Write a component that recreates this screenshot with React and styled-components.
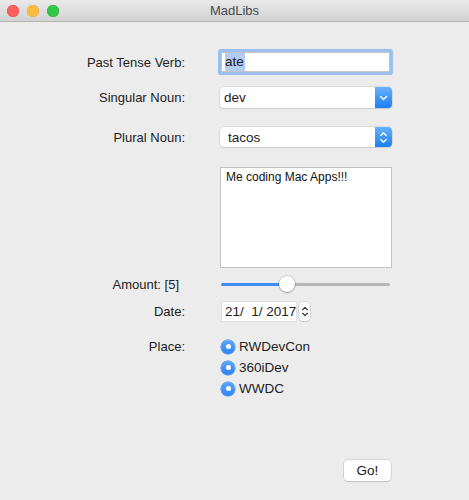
import React from "react";
import styled, { createGlobalStyle } from "styled-components";

const Global = createGlobalStyle`
  html, body { margin: 0; padding: 0; background: #ececec; }
  body { font-family: "Liberation Sans", Arial, sans-serif; font-size: 13px; color: #222; }
`;

const Window = styled.div`
  width: 469px;
  height: 500px;
  background: #ececec;
  display: flex;
  flex-direction: column;
  overflow: hidden;
`;

const TitleBar = styled.div`
  height: 21px;
  flex: none;
  display: flex;
  align-items: center;
  position: relative;
  background: linear-gradient(#e9e9e9, #d2d2d2);
  border-bottom: 1px solid #b4b4b4;
`;

const Lights = styled.div`
  display: flex;
  gap: 8px;
  padding-left: 7px;
`;

const Light = styled.span`
  width: 12px;
  height: 12px;
  border-radius: 50%;
  background: ${(p) => p.$c};
  box-shadow: inset 0 0 0 0.5px ${(p) => p.$b};
`;

const Title = styled.div`
  position: absolute;
  left: 0;
  right: 0;
  text-align: center;
  font-size: 13px;
  color: #4a4a4a;
  pointer-events: none;
`;

const Content = styled.div`
  display: flex;
  flex-direction: column;
`;

const Row = styled.div`
  display: grid;
  grid-template-columns: 185px 172px;
  column-gap: 35px;
  align-items: ${(p) => p.$align || "center"};
  margin-top: ${(p) => p.$mt}px;
`;

const Label = styled.div`
  text-align: right;
  font-size: 13px;
  color: #222;
  white-space: nowrap;
  padding-right: ${(p) => p.$pr || 0}px;
  padding-top: ${(p) => p.$pt || 0}px;
`;

const TextField = styled.div`
  height: 20px;
  margin: 0 2px 0 1px;
  background: #fff;
  border: 1px solid #c5c5c5;
  box-sizing: border-box;
  box-shadow: 0 0 0 3px #9dbff0;
  border-radius: 1px;
  display: flex;
  align-items: center;
  padding-left: 3px;
  font-size: 13.5px;
`;

const Selected = styled.span`
  background: #b1cdf3;
  padding: 1px 1px 2px 0;
`;

const Popup = styled.div`
  height: ${(p) => p.$h}px;
  background: #fff;
  border-radius: 4px;
  box-shadow: 0 0 0 0.5px #c9c9c9, 0 1px 1px rgba(0, 0, 0, 0.12);
  display: flex;
  align-items: center;
  overflow: hidden;
  font-size: 13.5px;
`;

const PopupText = styled.span`
  flex: 1;
  padding-left: ${(p) => p.$pl}px;
`;

const PopupArrow = styled.div`
  width: 17px;
  align-self: stretch;
  background: linear-gradient(#69b1fb, #1b7ff6);
  display: flex;
  align-items: center;
  justify-content: center;
`;

const TextView = styled.div`
  height: 101px;
  background: #fff;
  border: 1px solid #c2c2c2;
  box-sizing: border-box;
  padding: 2px 5px;
  font-size: 12px;
  color: #111;
`;

const Slider = styled.div`
  height: 16px;
  position: relative;
  display: flex;
  align-items: center;
  margin-right: 2px;
  margin-left: 1px;
`;

const Track = styled.div`
  height: 3px;
  width: 100%;
  border-radius: 2px;
  background: linear-gradient(
    to right,
    #3d8ef6 0,
    #3d8ef6 ${(p) => p.$pct}%,
    #b7b7b7 ${(p) => p.$pct}%,
    #b7b7b7 100%
  );
`;

const Knob = styled.div`
  position: absolute;
  top: 0;
  width: 16px;
  height: 16px;
  margin-left: -8px;
  border-radius: 50%;
  background: #fff;
  box-shadow: 0 0 0 0.5px rgba(0, 0, 0, 0.25), 0 1px 1.5px rgba(0, 0, 0, 0.25);
`;

const DateWrap = styled.div`
  display: flex;
  align-items: center;
  gap: 2px;
  padding-left: 1px;
`;

const DateField = styled.div`
  width: 76px;
  height: 21px;
  box-sizing: border-box;
  background: #fff;
  border: 1px solid #e0e0e0;
  display: flex;
  align-items: center;
  padding-left: 3px;
  white-space: pre;
  font-size: 13.5px;
`;

const Stepper = styled.div`
  width: 11px;
  height: 19px;
  background: #fff;
  border-radius: 4px;
  box-shadow: 0 0 0 0.5px #bdbdbd, 0 1px 1px rgba(0, 0, 0, 0.12);
  display: flex;
  align-items: center;
  justify-content: center;
`;

const Radios = styled.div`
  display: flex;
  flex-direction: column;
`;

const RadioRow = styled.div`
  height: 21px;
  display: flex;
  align-items: center;
  gap: 4px;
  padding-left: 1px;
  font-size: 13.5px;
`;

const RadioDot = styled.span`
  width: 14px;
  height: 14px;
  border-radius: 50%;
  background: linear-gradient(#5aa6fb, #2a83f5);
  box-shadow: 0 0 0 0.5px #2a78e0;
  display: flex;
  align-items: center;
  justify-content: center;
  &::after {
    content: "";
    width: 5px;
    height: 5px;
    border-radius: 50%;
    background: #fff;
  }
`;

const Footer = styled.div`
  display: flex;
  justify-content: flex-end;
  padding-right: 78px;
  margin-top: ${(p) => p.$mt}px;
`;

const Button = styled.button`
  width: 47px;
  height: 21px;
  background: #fff;
  border: none;
  border-radius: 4px;
  box-shadow: 0 0 0 0.5px #bdbdbd, 0 1px 1px rgba(0, 0, 0, 0.15);
  font-family: "Liberation Sans", Arial, sans-serif;
  font-size: 13.5px;
  color: #1a1a1a;
  padding: 0;
`;

const ChevronDown = () => (
  <svg width="9" height="6" viewBox="0 0 9 6">
    <path d="M1.5 1.5 L4.5 4.5 L7.5 1.5" stroke="#fff" strokeWidth="1.4" fill="none" strokeLinecap="round" strokeLinejoin="round" />
  </svg>
);

const ChevronUpDown = ({ color = "#fff", w = 9 }) => (
  <svg width={w} height="13" viewBox="0 0 9 13">
    <path d="M1.8 4.5 L4.5 1.8 L7.2 4.5" stroke={color} strokeWidth="1.3" fill="none" strokeLinecap="round" strokeLinejoin="round" />
    <path d="M1.8 8.5 L4.5 11.2 L7.2 8.5" stroke={color} strokeWidth="1.3" fill="none" strokeLinecap="round" strokeLinejoin="round" />
  </svg>
);

export default function App() {
  return (
    <Window>
      <Global />
      <TitleBar>
        <Lights>
          <Light $c="#fc605c" $b="#de4a45" />
          <Light $c="#fdbc40" $b="#dea236" />
          <Light $c="#34c84a" $b="#2aa83c" />
        </Lights>
        <Title>MadLibs</Title>
      </TitleBar>
      <Content>
        <Row $mt={30}>
          <Label>Past Tense Verb:</Label>
          <TextField>
            <Selected>ate</Selected>
          </TextField>
        </Row>
        <Row $mt={15}>
          <Label>Singular Noun:</Label>
          <Popup $h={21}>
            <PopupText $pl={4}>dev</PopupText>
            <PopupArrow>
              <ChevronDown />
            </PopupArrow>
          </Popup>
        </Row>
        <Row $mt={19}>
          <Label>Plural Noun:</Label>
          <Popup $h={20}>
            <PopupText $pl={8}>tacos</PopupText>
            <PopupArrow>
              <ChevronUpDown />
            </PopupArrow>
          </Popup>
        </Row>
        <Row $mt={20}>
          <span />
          <TextView>Me coding Mac Apps!!!</TextView>
        </Row>
        <Row $mt={8}>
          <Label $pr={6}>Amount: [5]</Label>
          <Slider>
            <Track $pct={39} />
            <Knob style={{ left: "39%" }} />
          </Slider>
        </Row>
        <Row $mt={9}>
          <Label>Date:</Label>
          <DateWrap>
            <DateField>{"21/  1/ 2017"}</DateField>
            <Stepper>
              <ChevronUpDown color="#333" w={8} />
            </Stepper>
          </DateWrap>
        </Row>
        <Row $mt={14} $align="start">
          <Label $pt={3}>Place:</Label>
          <Radios>
            <RadioRow>
              <RadioDot />
              RWDevCon
            </RadioRow>
            <RadioRow>
              <RadioDot />
              360iDev
            </RadioRow>
            <RadioRow>
              <RadioDot />
              WWDC
            </RadioRow>
          </Radios>
        </Row>
        <Footer $mt={61}>
          <Button>Go!</Button>
        </Footer>
      </Content>
    </Window>
  );
}
